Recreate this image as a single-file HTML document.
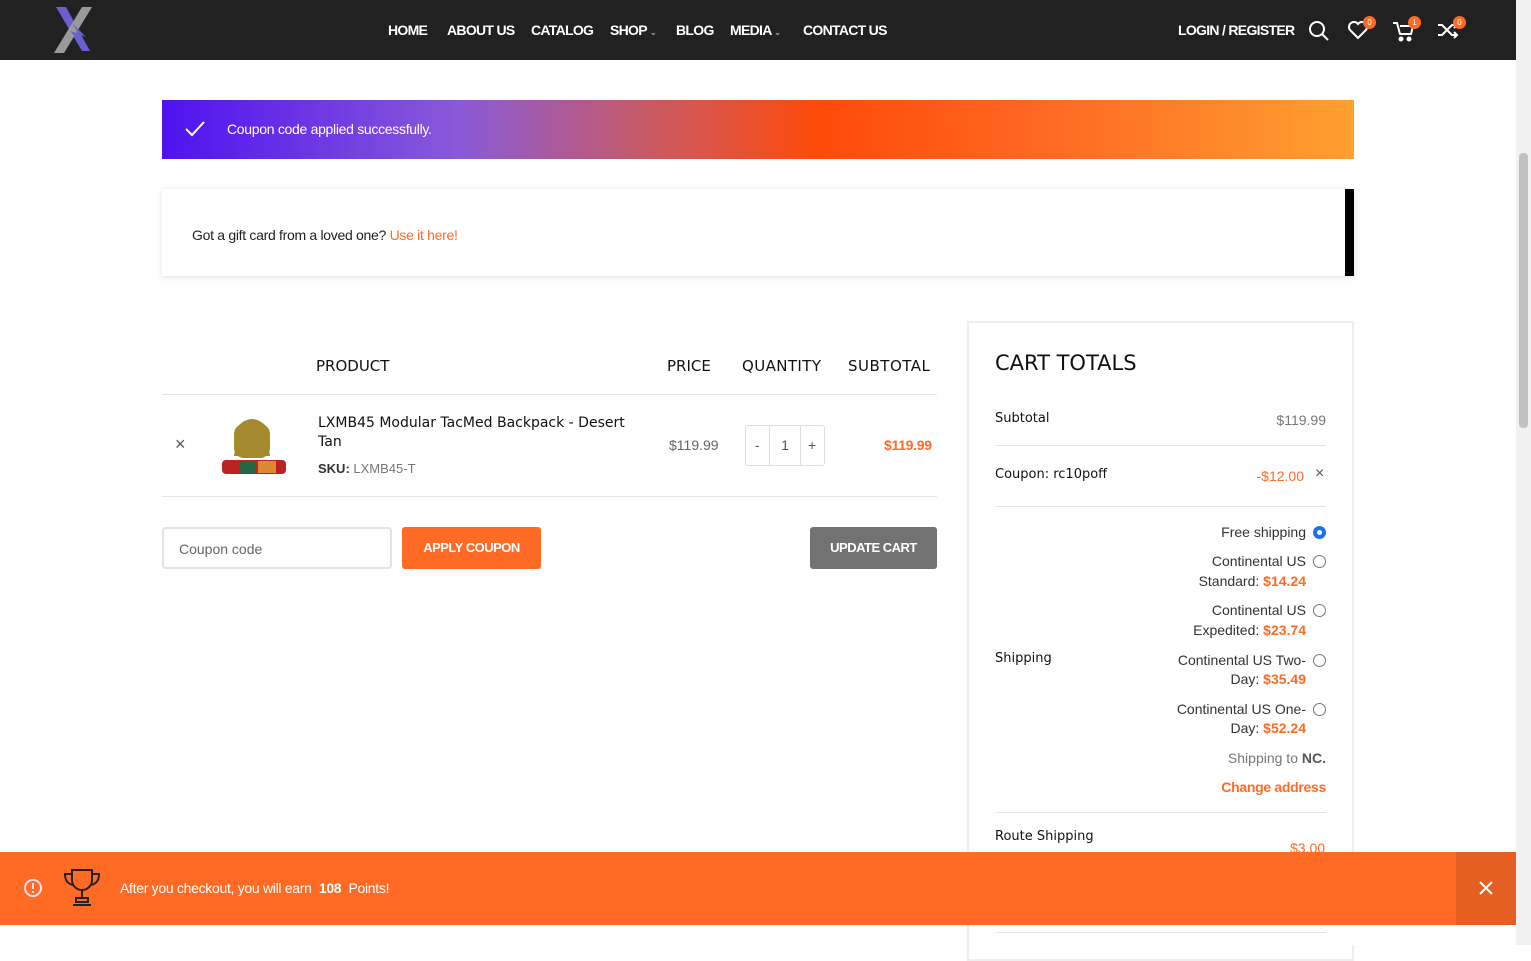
<!DOCTYPE html>
<html><head><meta charset="utf-8"><style>
*{box-sizing:border-box;margin:0;padding:0}
body{width:1531px;height:945px;overflow:hidden;background:#fff;font-family:"Liberation Sans",sans-serif;color:#333;position:relative;font-size:14px}
.abs{position:absolute}
.hdr{left:0;top:0;width:1516px;height:60px;background:#212121}
.nav a{color:#fff;font-weight:bold;font-size:14px;letter-spacing:-0.7px;position:absolute;top:22px;text-decoration:none}
.mont{font-family:"DejaVu Sans",sans-serif;color:#111!important}
.badge{position:absolute;width:13px;height:13px;border-radius:50%;background:#ff6a24;color:#fff;font-size:8px;text-align:center;line-height:13px}
.o{color:#ff6a24}
.r{text-align:right}
.sl{position:absolute;right:225px;text-align:right;color:#333;white-space:nowrap;font-size:14px}
.rad{position:absolute;left:1313px;width:13px;height:13px;border-radius:50%;border:1px solid #777}
</style></head><body>
<div class="abs hdr">
<svg class="abs" style="left:52px;top:5px" width="42" height="50" viewBox="0 0 42 50"><path d="M4 2h10l24 44h-8z" fill="#6a5fd0"/><path d="M30 2h10L12 48H2z" fill="#9a9a9a"/><path d="M20 18l14 14-10-4 8 14-14-16 9 3z" fill="#6a5fd0"/></svg>
<div class="nav">
<a style="left:388px">HOME</a><a style="left:447px">ABOUT US</a><a style="left:531px">CATALOG</a><a style="left:610px">SHOP <span style="font-size:8px;color:#aaa">⌄</span></a><a style="left:676px">BLOG</a><a style="left:730px">MEDIA <span style="font-size:8px;color:#aaa">⌄</span></a><a style="left:803px">CONTACT US</a>
<a style="left:1178px">LOGIN / REGISTER</a></div>
<svg class="abs" style="left:1308px;top:20px" width="22" height="22" fill="none" stroke="#fff" stroke-width="2"><circle cx="9" cy="9" r="7"/><path d="M14 14l6 6"/></svg>
<svg class="abs" style="left:1347px;top:20px" width="22" height="20" fill="none" stroke="#fff" stroke-width="2"><path d="M11 18L3 10a4.5 4.5 0 0 1 8-6 4.5 4.5 0 0 1 8 6z"/></svg>
<div class="badge" style="left:1363px;top:16px">0</div>
<svg class="abs" style="left:1392px;top:20px" width="24" height="22" fill="none" stroke="#fff" stroke-width="2"><path d="M1 3h4l3 11h11l2-8H8"/><circle cx="9" cy="19" r="1.5" fill="#fff"/><circle cx="17" cy="19" r="1.5" fill="#fff"/></svg>
<div class="badge" style="left:1408px;top:16px">1</div>
<svg class="abs" style="left:1437px;top:21px" width="22" height="18" fill="none" stroke="#fff" stroke-width="2"><path d="M1 4h4l10 10h5M1 14h4l10-10h5M17 1l3 3-3 3M17 11l3 3-3 3"/></svg>
<div class="badge" style="left:1453px;top:16px">0</div>
</div>
<div class="abs" style="left:1516px;top:0;width:15px;height:945px;background:#f1f1f1"></div>
<div class="abs" style="left:1519px;top:153px;width:9px;height:275px;background:#c1c1c1;border-radius:4px"></div>

<div class="abs" style="left:162px;top:100px;width:1192px;height:59px;background:linear-gradient(90deg,#4f12f0 0%,#8a5ad8 25%,#c55a6a 40%,#ff4a0a 55%,#ff6a24 75%,#ffa030 100%)"></div>
<svg class="abs" style="left:184px;top:120px" width="22" height="18" fill="none" stroke="#fff" stroke-width="2"><path d="M2 9l6 6L20 2"/></svg>
<div class="abs" style="left:227px;top:121px;color:#fff;font-size:14px;letter-spacing:-0.3px">Coupon code applied successfully.</div>

<div class="abs" style="left:162px;top:189px;width:1192px;height:87px;background:#fff;box-shadow:0 1px 6px rgba(0,0,0,.12);border-right:9px solid #000"></div>
<div class="abs" style="left:192px;top:227px;font-size:14px;color:#222;letter-spacing:-0.3px">Got a gift card from a loved one? <span class="o">Use it here!</span></div>

<div class="abs mont" style="left:316px;top:357px;font-size:15px">PRODUCT</div>
<div class="abs mont" style="left:667px;top:357px;font-size:15px">PRICE</div>
<div class="abs mont" style="left:742px;top:357px;font-size:15px;letter-spacing:0.4px">QUANTITY</div>
<div class="abs mont" style="left:848px;top:357px;font-size:15px;letter-spacing:0.5px">SUBTOTAL</div>
<div class="abs" style="left:162px;top:394px;width:775px;height:1px;background:#e5e5e5"></div>
<div class="abs" style="left:175px;top:434px;font-size:18px;color:#555">×</div>
<svg class="abs" style="left:220px;top:414px" width="68" height="64"><path d="M18 12q14-14 28 0l4 30-36 0z" fill="#a48a2c"/><rect x="14" y="10" width="36" height="34" rx="10" fill="#a48a2c"/><rect x="2" y="46" width="64" height="14" rx="4" fill="#b22"/><rect x="20" y="47" width="16" height="12" fill="#264"/><rect x="38" y="47" width="18" height="12" fill="#d83"/></svg>
<div class="abs mont" style="left:318px;top:414px;font-size:14px;line-height:19px;width:330px">LXMB45 Modular TacMed Backpack - Desert Tan</div>
<div class="abs" style="left:318px;top:461px;font-size:13px;color:#777"><b style="color:#333">SKU:</b> LXMB45-T</div>
<div class="abs" style="left:669px;top:437px;color:#666">$119.99</div>
<div class="abs" style="left:745px;top:425px;width:80px;height:41px;border:1px solid #ddd;border-radius:3px"></div>
<div class="abs" style="left:769px;top:425px;width:32px;height:41px;border-left:1px solid #ddd;border-right:1px solid #ddd;text-align:center;line-height:41px;color:#555">1</div>
<div class="abs" style="left:755px;top:437px;color:#555">-</div><div class="abs" style="left:808px;top:437px;color:#555">+</div>
<div class="abs o" style="left:884px;top:437px;font-weight:bold;letter-spacing:-0.3px">$119.99</div>
<div class="abs" style="left:162px;top:496px;width:775px;height:1px;background:#e5e5e5"></div>
<div class="abs" style="left:162px;top:527px;width:230px;height:42px;border:2px solid #e3e3e3;border-radius:4px;padding:12px 15px;color:#666">Coupon code</div>
<div class="abs" style="left:402px;top:527px;width:139px;height:42px;background:#ff6a24;border-radius:3px;color:#fff;font-weight:bold;font-size:13px;text-align:center;line-height:42px;letter-spacing:-.5px">APPLY COUPON</div>
<div class="abs" style="left:810px;top:527px;width:127px;height:42px;background:#727272;border-radius:3px;color:#fff;font-weight:bold;font-size:13px;text-align:center;line-height:42px;letter-spacing:-.5px">UPDATE CART</div>

<div class="abs" style="left:967px;top:321px;width:387px;height:640px;border:2px solid #eee"></div>
<div class="abs mont" style="left:995px;top:351px;font-size:21px">CART TOTALS</div>
<div class="abs mont" style="left:995px;top:411px;font-size:13px">Subtotal</div>
<div class="abs" style="left:1200px;top:412px;width:126px;color:#777;text-align:right">$119.99</div>
<div class="abs" style="left:995px;top:445px;width:331px;height:1px;background:#e5e5e5"></div>
<div class="abs mont" style="left:995px;top:467px;font-size:13px">Coupon: rc10poff</div>
<div class="abs o" style="left:1200px;top:468px;width:104px;text-align:right">-$12.00</div>
<div class="abs" style="left:1315px;top:465px;color:#555;font-size:16px">×</div>
<div class="abs" style="left:995px;top:506px;width:331px;height:1px;background:#e5e5e5"></div>
<div class="abs mont" style="left:995px;top:651px;font-size:13px">Shipping</div>
<div class="sl" style="top:524px">Free shipping</div>
<div class="sl" style="top:553px">Continental US</div>
<div class="sl" style="top:573px">Standard: <b class="o">$14.24</b></div>
<div class="sl" style="top:602px">Continental US</div>
<div class="sl" style="top:622px">Expedited: <b class="o">$23.74</b></div>
<div class="sl" style="top:652px">Continental US Two-</div>
<div class="sl" style="top:671px">Day: <b class="o">$35.49</b></div>
<div class="sl" style="top:701px">Continental US One-</div>
<div class="sl" style="top:720px">Day: <b class="o">$52.24</b></div>
<div class="abs" style="left:1313px;top:526px;width:13px;height:13px;border-radius:50%;border:4px solid #1a73e8;box-shadow:inset 0 0 0 1px #fff"></div>
<div class="rad" style="top:555px"></div>
<div class="rad" style="top:604px"></div>
<div class="rad" style="top:654px"></div>
<div class="rad" style="top:703px"></div>
<div class="abs r" style="left:1100px;top:750px;width:226px;color:#777">Shipping to <b style="color:#555">NC.</b></div>
<div class="abs r o" style="left:1100px;top:779px;width:226px;font-weight:bold;letter-spacing:-0.3px">Change address</div>
<div class="abs" style="left:995px;top:812px;width:331px;height:1px;background:#e5e5e5"></div>
<div class="abs mont" style="left:995px;top:829px;font-size:13px">Route Shipping</div>
<div class="abs o" style="left:1290px;top:840px">$3.00</div>

<div class="abs" style="left:0;top:852px;width:1516px;height:73px;background:#ff6a24"></div>
<div class="abs" style="left:1456px;top:852px;width:60px;height:73px;background:#e55f22"></div>
<svg class="abs" style="left:1478px;top:880px" width="16" height="16" stroke="#fff" stroke-width="2"><path d="M2 2l12 12M14 2L2 14"/></svg>
<svg class="abs" style="left:23px;top:878px" width="20" height="20" fill="none" stroke="#fde" stroke-width="2"><circle cx="10" cy="10" r="8"/><path d="M10 5v6M10 13v2"/></svg>
<svg class="abs" style="left:63px;top:868px" width="38" height="40" fill="none" stroke="#222" stroke-width="2"><path d="M9 2h20v10a10 10 0 0 1-20 0zM9 6H2c0 8 4 10 8 11M29 6h7c0 8-4 10-8 11M19 22v8M13 30h12v4H13zM10 37h18"/></svg>
<div class="abs" style="left:120px;top:880px;color:#fff;font-size:14px;letter-spacing:-0.3px">After you checkout, you will earn&nbsp; <b>108</b>&nbsp; Points!</div>
<div class="abs" style="left:0;top:925px;width:1516px;height:20px;background:#fff"></div>
<div class="abs" style="left:967px;top:925px;width:2px;height:20px;background:#eee"></div>
<div class="abs" style="left:995px;top:932px;width:331px;height:1px;background:#e5e5e5"></div>
</body></html>
